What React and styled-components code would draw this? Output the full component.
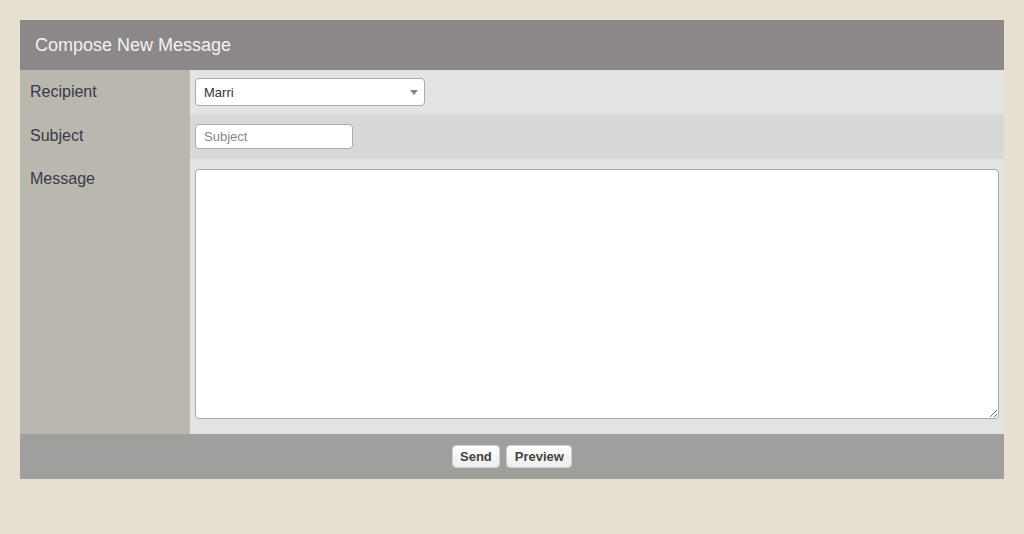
import React from "react";
import styled, { createGlobalStyle } from "styled-components";

const GlobalStyle = createGlobalStyle`
  html, body {
    margin: 0;
    padding: 0;
    background: #e6dfd2;
    font-family: "Liberation Sans", Arial, sans-serif;
  }
  * { box-sizing: border-box; }
`;

const Page = styled.div`
  padding: 20px;
`;

const Panel = styled.form`
  width: 984px;
  display: flex;
  flex-direction: column;
`;

const Header = styled.div`
  height: 50px;
  background: #8c8889;
  color: #f2f2f2;
  font-size: 18px;
  padding-left: 15px;
  display: flex;
  align-items: center;
`;

const Row = styled.div`
  display: grid;
  grid-template-columns: 170px 1fr;
  background: ${(p) => (p.alt ? "#d8d8d8" : "#e3e3e3")};
`;

const Label = styled.label`
  background: #bab7af;
  color: #3a394b;
  font-size: 16px;
  padding: ${(p) => p.pad || "12px 10px"};
  line-height: 19px;
`;

const Field = styled.div`
  padding: ${(p) => p.pad || "10px 5px"};
  display: flex;
`;

const SelectWrap = styled.div`
  position: relative;
  width: 230px;
  height: 28px;

  &::after {
    content: "";
    position: absolute;
    right: 7px;
    top: 12px;
    border-left: 4px solid transparent;
    border-right: 4px solid transparent;
    border-top: 5px solid #888;
    pointer-events: none;
  }
`;

const Select = styled.select`
  appearance: none;
  width: 100%;
  height: 100%;
  border: 1px solid #aaa;
  border-radius: 4px;
  background: #fff;
  color: #333;
  font-family: "Liberation Sans", Arial, sans-serif;
  font-size: 13px;
  padding: 0 8px;
  outline: none;
`;

const Input = styled.input`
  width: 158px;
  height: 25px;
  border: 1px solid #aaa;
  border-radius: 4px;
  background: #fff;
  font-family: "Liberation Sans", Arial, sans-serif;
  font-size: 13px;
  padding: 0 8px;
  outline: none;
  &::placeholder { color: #888; }
`;

const TextArea = styled.textarea`
  width: 804px;
  height: 250px;
  border: 1px solid #aaa;
  border-radius: 4px;
  background: #fff;
  resize: both;
  outline: none;
  display: block;
`;

const Footer = styled.div`
  height: 45px;
  background: #a19f9d;
  display: flex;
  justify-content: center;
  align-items: center;
  gap: 6px;
`;

const Button = styled.button`
  height: 23px;
  padding: 0 7.5px;
  border: 1px solid #cfcfcf;
  border-radius: 4px;
  background: linear-gradient(#ffffff, #ededed);
  color: #444;
  font-family: "Liberation Sans", Arial, sans-serif;
  font-weight: bold;
  font-size: 13px;
  cursor: pointer;
`;

export default function App() {
  return (
    <>
      <GlobalStyle />
      <Page>
        <Panel onSubmit={(e) => e.preventDefault()}>
          <Header>Compose New Message</Header>
          <Row>
            <Label>Recipient</Label>
            <Field pad="8px 5px">
              <SelectWrap>
                <Select defaultValue="Marri">
                  <option>Marri</option>
                </Select>
              </SelectWrap>
            </Field>
          </Row>
          <Row alt>
            <Label>Subject</Label>
            <Field>
              <Input placeholder="Subject" />
            </Field>
          </Row>
          <Row>
            <Label pad="10px 10px">Message</Label>
            <Field pad="10px 5px 15px">
              <TextArea />
            </Field>
          </Row>
          <Footer>
            <Button type="submit">Send</Button>
            <Button type="button">Preview</Button>
          </Footer>
        </Panel>
      </Page>
    </>
  );
}
